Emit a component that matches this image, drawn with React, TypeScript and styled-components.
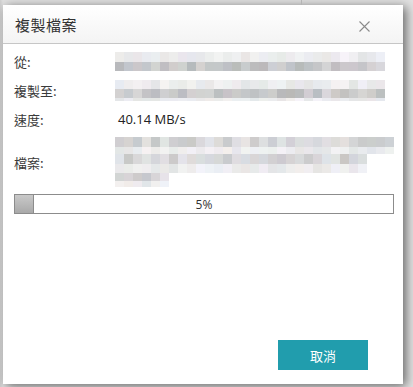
import React from "react";
import styled, { createGlobalStyle } from "styled-components";

const Global = createGlobalStyle`
  html, body { margin: 0; padding: 0; }
  body {
    width: 413px;
    height: 387px;
    overflow: hidden;
    background: #d9d9d9;
    font-family: "Open Sans", "Noto Sans CJK TC", sans-serif;
  }
`;

const Backdrop = styled.div`
  position: relative;
  width: 413px;
  height: 387px;
  padding: 5px 0 0 3px;
  box-sizing: border-box;
  background: linear-gradient(to right, #cfcfcf 0, #e2e2e2 3px, #e2e2e2 100%);
  &::before {
    content: "";
    position: absolute;
    left: 301px;
    top: 0;
    width: 1px;
    height: 5px;
    background: #b5b5b5;
  }
`;

const Dialog = styled.div`
  width: 400px;
  height: 379px;
  background: #fff;
  display: flex;
  flex-direction: column;
  box-shadow: 3px 2px 10px rgba(0, 0, 0, 0.55);
`;

const Header = styled.div`
  height: 38px;
  display: flex;
  align-items: center;
  justify-content: space-between;
  padding: 0 33px 0 12px;
  background: linear-gradient(#ffffff, #f4f4f4);
  border-bottom: 1px solid #c6c6c6;
`;

const Title = styled.div`
  font-family: "Noto Sans CJK TC", sans-serif;
  font-size: 15px;
  color: #333;
  letter-spacing: 0.5px;
  margin-top: 1px;
`;

const Close = styled.svg`
  width: 11px;
  height: 11px;
  margin-top: 5px;
`;

const Body = styled.div`
  padding: 8px 11px 0 11px;
  display: flex;
  flex-direction: column;
`;

const Row = styled.div<{ $h: number; $mb?: number }>`
  display: flex;
  align-items: center;
  height: ${(p) => p.$h}px;
  margin-bottom: ${(p) => p.$mb ?? 0}px;
`;

const Label = styled.div`
  width: 101px;
  flex-shrink: 0;
  font-family: "Noto Sans CJK TC", sans-serif;
  font-size: 13px;
  color: #3a3a3a;
`;

const Value = styled.div`
  font-family: "Open Sans", sans-serif;
  font-size: 13px;
  color: #222;
  padding-left: 3px;
`;

const MosaicBox = styled.div`
  display: flex;
  flex-direction: column;
`;

const MosaicRow = styled.div`
  display: flex;
`;

const Cell = styled.span`
  display: block;
  width: 9px;
`;

const Progress = styled.div`
  margin-top: 7px;
  width: 380px;
  height: 20px;
  box-sizing: border-box;
  border: 1px solid #8c8c8c;
  position: relative;
  display: flex;
  align-items: center;
  justify-content: center;
`;

const Fill = styled.div`
  position: absolute;
  left: 0;
  top: 0;
  bottom: 0;
  width: 18px;
  background: linear-gradient(#c9c9c9, #a9a9a9);
  border-right: 1px solid #8c8c8c;
`;

const Percent = styled.span`
  font-family: "Open Sans", sans-serif;
  font-size: 12px;
  color: #333;
  position: relative;
`;

const Footer = styled.div`
  margin-top: auto;
  display: flex;
  justify-content: flex-end;
  padding: 0 35px 14px 0;
`;

const Button = styled.button`
  width: 90px;
  height: 30px;
  border: none;
  background: #219dad;
  color: #fff;
  font-family: "Noto Sans CJK TC", sans-serif;
  font-size: 13px;
  cursor: pointer;
`;

type Tone = "light" | "mid" | "dark";
type MRow = { h: number; w: number; tone: Tone };

let seed = 7;
const rand = () => {
  seed = (seed * 9301 + 49297) % 233280;
  return seed / 233280;
};

const cellColor = (tone: Tone) => {
  const base = tone === "light" ? 236 : tone === "mid" ? 214 : 200;
  const spread = tone === "light" ? 14 : tone === "mid" ? 30 : 30;
  const g = Math.round(base + (rand() - 0.5) * spread);
  const r = g + Math.round((rand() - 0.5) * 10);
  const b = g + Math.round((rand() - 0.3) * 10);
  const c = (v: number) => Math.max(150, Math.min(252, v));
  return `rgb(${c(r)},${c(g)},${c(b)})`;
};

const Mosaic: React.FC<{ rows: MRow[] }> = ({ rows }) => (
  <MosaicBox>
    {rows.map((r, i) => (
      <MosaicRow key={i} style={{ height: r.h }}>
        {Array.from({ length: Math.round(r.w / 9) }).map((_, j) => (
          <Cell key={j} style={{ background: cellColor(r.tone) }} />
        ))}
      </MosaicRow>
    ))}
  </MosaicBox>
);

const fromRows: MRow[] = [
  { h: 10, w: 274, tone: "light" },
  { h: 9, w: 274, tone: "dark" },
];
const toRows: MRow[] = [
  { h: 9, w: 274, tone: "light" },
  { h: 9, w: 274, tone: "dark" },
  { h: 3, w: 274, tone: "light" },
];
const fileRows: MRow[] = [
  { h: 10, w: 279, tone: "mid" },
  { h: 7, w: 279, tone: "light" },
  { h: 10, w: 252, tone: "mid" },
  { h: 9, w: 252, tone: "light" },
  { h: 8, w: 54, tone: "mid" },
  { h: 6, w: 54, tone: "light" },
];

const App: React.FC = () => {
  return (
    <>
      <Global />
      <Backdrop>
        <Dialog>
          <Header>
            <Title>複製檔案</Title>
            <Close viewBox="0 0 11 11">
              <path d="M0.5 0.5 L10.5 10.5 M10.5 0.5 L0.5 10.5" stroke="#8a8a8a" strokeWidth="1.1" fill="none" />
            </Close>
          </Header>
          <Body>
            <Row $h={19} $mb={9}>
              <Label>從:</Label>
              <Mosaic rows={fromRows} />
            </Row>
            <Row $h={21}>
              <Label>複製至:</Label>
              <Mosaic rows={toRows} />
            </Row>
            <Row $h={36}>
              <Label>速度:</Label>
              <Value>40.14 MB/s</Value>
            </Row>
            <Row $h={50}>
              <Label>檔案:</Label>
              <Mosaic rows={fileRows} />
            </Row>
            <Progress>
              <Fill />
              <Percent>5%</Percent>
            </Progress>
          </Body>
          <Footer>
            <Button>取消</Button>
          </Footer>
        </Dialog>
      </Backdrop>
    </>
  );
};

export default App;
